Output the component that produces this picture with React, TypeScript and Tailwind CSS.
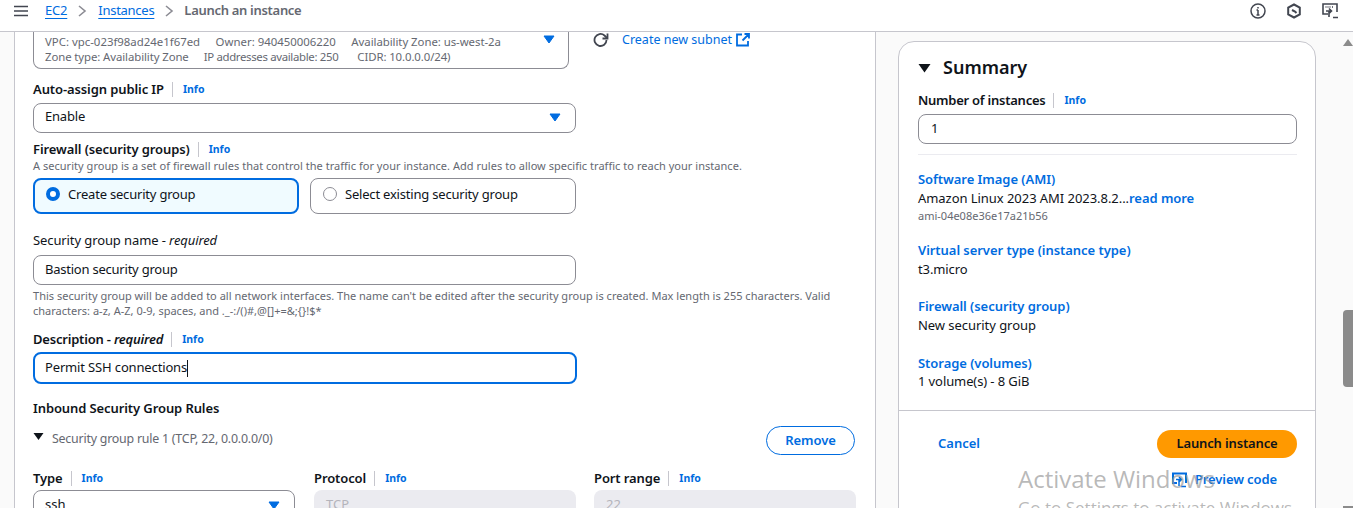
import React from "react";

const Info = ({ className = "" }: { className?: string }) => (
  <span className={"text-[10.5px] font-bold text-[#006ce0] relative top-px " + className}>Info</span>
);

const Label = ({ children, className = "", tight = false }: { children: React.ReactNode; className?: string; tight?: boolean }) => (
  <div className={"flex items-center h-[16px] " + className}>
    <span className={"text-[13px] font-semibold text-[#0f141a] leading-[16px] " + (tight ? "tracking-[-0.25px]" : "tracking-[-0.1px]")}>{children}</span>
    <span className="w-px h-[15px] bg-[#c6c6cd] ml-[8px] mr-[10px]" />
    <Info />
  </div>
);

const Caret = ({ className = "" }: { className?: string }) => (
  <svg width="12" height="9" viewBox="0 0 12 9" className={className}>
    <path d="M1 1h10L6 8z" fill="#006ce0" stroke="#006ce0" strokeLinejoin="round" />
  </svg>
);

const Chevron = () => (
  <svg width="10" height="12" viewBox="0 0 10 12" className="mx-[10px]">
    <path d="M2 1l6 5-6 5" fill="none" stroke="#8c8c94" strokeWidth="1.6" />
  </svg>
);

export default function App() {
  return (
    <div className="w-[1353px] h-[508px] overflow-hidden relative bg-white flex flex-col text-[#0f141a] font-['Noto_Sans','Liberation_Sans',sans-serif]">
      <header className="h-[32px] shrink-0 border-b border-[#c6c6cd] flex items-center pb-[9px] bg-white">
        <svg width="14" height="12" viewBox="0 0 14 12" className="ml-[14px] mr-[17px]">
          <path d="M0 1.500h14M0 6h14M0 10.500h14" stroke="#424650" strokeWidth="1.600" />
        </svg>
        <span className="text-[13px] tracking-[-0.2px] text-[#006ce0] underline underline-offset-[3px]">EC2</span>
        <Chevron />
        <span className="text-[13px] tracking-[-0.27px] text-[#006ce0] underline underline-offset-[3px] ml-px">Instances</span>
        <Chevron />
        <span className="text-[13px] font-semibold tracking-[-0.3px] text-[#656871]">Launch an instance</span>
        <div className="ml-auto flex items-center gap-[20px] mr-[15px]">
          <svg width="16" height="16" viewBox="0 0 16 16" fill="none" stroke="#424650" strokeWidth="1.500">
            <circle cx="8" cy="8" r="7" />
            <path d="M8 7v5M6.500 12h3M6.500 7H8M8 4v1.500" />
          </svg>
          <svg width="16" height="16" viewBox="0 0 16 16" fill="none" stroke="#424650" strokeWidth="2">
            <path d="M8 1.500l5.800 3.200v6.600L8 14.500l-5.800-3.200V4.700z" />
            <path d="M6 7l3 1.500L10.500 10" strokeWidth="2" />
          </svg>
          <svg width="16" height="16" viewBox="0 0 16 16" fill="none" stroke="#424650" strokeWidth="1.600">
            <path d="M6 11H1V1h14v8" />
            <path d="M3.500 4h5M10 4h2" strokeDasharray="1 1" />
            <path d="M4 8h5M7 5.500L9.500 8 7 10.500M7 8v6M11 14.500h5" />
          </svg>
        </div>
      </header>

      <div className="flex flex-1 min-h-0">
        <div className="w-[15px] shrink-0 bg-[#fafafa] border-r border-[#c6c6cd]" />

        <main className="w-[860px] shrink-0 pl-[18px] pr-[20px] bg-white">
          <div className="flex items-start">
            <div className="w-[536px] shrink-0 h-[37px] border border-t-0 border-[#8c8c94] rounded-b-[8px] pl-[11px] pr-[14px] relative text-[11.4px] leading-[15px] text-[#656871]">
              <div className="pt-[2px] flex gap-[15.500px]">
                <span>VPC: vpc-023f98ad24e1f67ed</span>
                <span>Owner: 940450006220</span>
                <span className="tracking-[-0.05px]">Availability Zone: us-west-2a</span>
              </div>
              <div className="flex gap-[15px]">
                <span className="tracking-[-0.1px]">Zone type: Availability Zone</span>
                <span className="tracking-[-0.33px]">IP addresses available: 250</span>
                <span className="tracking-[-0.1px] ml-[4px]">CIDR: 10.0.0.0/24)</span>
              </div>
              <Caret className="absolute right-[13px] top-[3px]" />
            </div>
            <svg width="16" height="16" viewBox="0 0 16 16" fill="none" stroke="#424650" strokeWidth="1.800" className="ml-[24px]">
              <path d="M13.500 8a6 6 0 1 1-2-4.500L14 6" />
              <path d="M14.500 1.500V6.500h-5" />
            </svg>
            <span className="ml-[13px] text-[12.500px] leading-[16px] text-[#006ce0]">Create new subnet</span>
            <svg width="14" height="14" viewBox="0 0 14 14" fill="none" stroke="#006ce0" strokeWidth="1.800" className="ml-[4px] mt-[1px]">
              <path d="M6 1.500H1v11h11V8M8.500 1H13v4.500M13 1L6.500 7.500" />
            </svg>
          </div>

          <Label className="mt-[12px]">Auto-assign public IP</Label>
          <div className="mt-[6px] w-[543px] h-[30px] border border-[#8c8c94] rounded-[8px] pl-[11px] pr-[14px] pb-[2px] flex items-center justify-between text-[13px] tracking-[-0.2px]">
            <span>Enable</span>
            <Caret />
          </div>

          <Label className="mt-[8px]">Firewall (security groups)</Label>
          <p className="mt-[1px] text-[11px] leading-[16px] tracking-[0.03px] text-[#656871]">
            A security group is a set of firewall rules that control the traffic for your instance. Add rules to allow specific traffic to reach your instance.
          </p>
          <div className="mt-[4px] flex gap-[11px]">
            <div className="w-[266px] h-[36px] border-2 border-[#006ce0] bg-[#f0fbff] rounded-[8px] flex items-start pl-[11px] pt-[5px] text-[13px] tracking-[-0.2px] leading-[18px]">
              <span className="w-[14px] h-[14px] rounded-full border-[4px] border-[#006ce0] bg-white mt-[2px] mr-[8px]" />
              Create security group
            </div>
            <div className="w-[266px] h-[36px] border border-[#8c8c94] rounded-[8px] flex items-start pl-[12px] pt-[6px] text-[13px] tracking-[-0.2px] leading-[18px]">
              <span className="w-[14px] h-[14px] rounded-full border border-[#8c8c94] bg-white mt-[2px] mr-[8px]" />
              Select existing security group
            </div>
          </div>

          <div className="mt-[18px] h-[16px] text-[13px] tracking-[-0.1px] leading-[16px]">
            Security group name - <i>required</i>
          </div>
          <div className="mt-[7px] w-[543px] h-[30px] border border-[#8c8c94] rounded-[8px] pl-[11px] flex items-center text-[13px] tracking-[-0.23px]">
            Bastion security group
          </div>
          <p className="mt-[3px] w-[810px] text-[11px] leading-[15px] tracking-[0.01px] text-[#656871]">
            This security group will be added to all network interfaces. The name can't be edited after the security group is created. Max length is 255 characters. Valid characters: a-z, A-Z, 0-9, spaces, and ._-:/()#,@[]+=&amp;;{"{}"}!$*
          </p>

          <div className="mt-[13px] flex items-center h-[16px]">
            <span className="text-[13px] font-semibold tracking-[-0.2px] leading-[16px]">
              Description - <i>required</i>
            </span>
            <span className="w-px h-[15px] bg-[#c6c6cd] ml-[8px] mr-[10px]" />
            <Info />
          </div>
          <div className="mt-[5px] w-[544px] h-[32px] border-2 border-[#006ce0] rounded-[8px] pl-[10px] flex items-center text-[13px] tracking-[-0.15px]">
            Permit SSH connections
            <span className="w-px h-[17px] bg-[#0f141a]" />
          </div>

          <div className="mt-[16px] text-[13px] font-semibold tracking-[-0.1px] leading-[16px]">Inbound Security Group Rules</div>

          <div className="mt-[10px] flex items-start justify-between">
            <div className="flex items-center h-[26px]">
              <svg width="11" height="9" viewBox="0 0 11 9" className="mb-[6px]">
                <path d="M.500 1h10L5.500 8z" fill="#0f141a" />
              </svg>
              <span className="ml-[8px] text-[12.4px] tracking-[-0.22px] text-[#656871]">Security group rule 1 (TCP, 22, 0.0.0.0/0)</span>
            </div>
            <div className="w-[89px] h-[29px] border border-[#006ce0] rounded-full flex items-center justify-center text-[13px] font-semibold tracking-[-0.1px] text-[#006ce0]">
              Remove
            </div>
          </div>

          <div className="mt-[15px] w-[824px] flex gap-[19px] items-start">
            <div className="w-[262px] shrink-0">
              <Label>Type</Label>
              <div className="mt-[4px] h-[30px] border border-[#8c8c94] rounded-[8px] pl-[11px] pr-[14px] flex items-center justify-between text-[13px]">
                <span>ssh</span>
                <Caret />
              </div>
            </div>
            <div className="w-[262px] shrink-0">
              <Label>Protocol</Label>
              <div className="mt-[4px] h-[30px] bg-[#ebebf0] rounded-[8px] pl-[12px] flex items-center text-[13px] text-[#b4b4bb]">TCP</div>
            </div>
            <div className="w-[262px] shrink-0 -ml-px">
              <Label>Port range</Label>
              <div className="mt-[4px] h-[30px] bg-[#ebebf0] rounded-[8px] pl-[12px] flex items-center text-[13px] text-[#b4b4bb]">22</div>
            </div>
          </div>
        </main>

        <aside className="w-[468px] shrink-0 border-l border-[#c6c6cd] bg-[#fafafa] pl-[22px] pt-[9px]">
          <div className="w-[418px] h-[500px] bg-white border border-[#c6c6cd] rounded-[16px] overflow-hidden">
            <div className="pl-[19px] pr-[18px]">
              <div className="flex items-center h-[25px] mt-[13px]">
                <svg width="13" height="10" viewBox="0 0 13 10">
                  <path d="M.500 1h12L6.500 9.500z" fill="#0f141a" />
                </svg>
                <span className="ml-[12px] text-[18px] font-semibold leading-[25px]">Summary</span>
              </div>
              <Label tight className="mt-[12px]">Number of instances</Label>
              <div className="mt-[6px] h-[30px] border border-[#8c8c94] rounded-[8px] pl-[12px] pb-[1px] flex items-center text-[13px]">1</div>
              <div className="mt-[10px] h-px bg-[#ebebf0]" />

              <div className="mt-[16px] text-[13px] font-semibold tracking-[-0.05px] leading-[16px] text-[#006ce0]">Software Image (AMI)</div>
              <div className="mt-[3px] text-[13px] tracking-[-0.05px] leading-[16px]">
                Amazon Linux 2023 AMI 2023.8.2...<span className="font-semibold text-[#006ce0]">read more</span>
              </div>
              <div className="mt-[2px] text-[11px] leading-[15px] text-[#656871]">ami-04e08e36e17a21b56</div>

              <div className="mt-[19px] text-[13px] font-semibold tracking-[-0.05px] leading-[16px] text-[#006ce0]">Virtual server type (instance type)</div>
              <div className="mt-[3px] text-[13px] tracking-[-0.1px] leading-[16px]">t3.micro</div>

              <div className="mt-[21px] text-[13px] font-semibold tracking-[-0.05px] leading-[16px] text-[#006ce0]">Firewall (security group)</div>
              <div className="mt-[3px] text-[13px] tracking-[-0.05px] leading-[16px]">New security group</div>

              <div className="mt-[22px] text-[13px] font-semibold tracking-[-0.05px] leading-[16px] text-[#006ce0]">Storage (volumes)</div>
              <div className="mt-[2px] text-[13px] tracking-[-0.1px] leading-[16px]">1 volume(s) - 8 GiB</div>
            </div>
            <div className="mt-[21px] h-px bg-[#c6c6cd]" />
            <div className="pl-[19px] pr-[18px] pt-[19px]">
              <div className="flex items-center justify-between">
                <span className="ml-[20px] text-[13px] font-semibold text-[#006ce0]">Cancel</span>
                <span className="w-[140px] h-[28px] rounded-full bg-[#ff9900] flex items-center justify-center text-[13px] font-semibold tracking-[-0.15px]">Launch instance</span>
              </div>
              <div className="mt-[12px] flex items-center justify-end pr-[20px] text-[13px] font-semibold tracking-[-0.1px] text-[#006ce0]">
                <svg width="15" height="16" viewBox="0 0 15 16" fill="none" stroke="#006ce0" strokeWidth="1.500" className="mr-[8px]">
                  <path d="M5 11H1V1.500h13V11" strokeWidth="2" />
                  <path d="M4 7.500h5M7 5l2.500 2.500L7 10M7 8v6M9 14.500h5" />
                </svg>
                Preview code
              </div>
            </div>
          </div>
        </aside>

        <div className="w-[10px] shrink-0 bg-[#fafafa] relative">
          <svg width="10" height="8" viewBox="0 0 10 8" className="absolute top-[6px] left-0">
            <path d="M0 8L5 1l5 7z" fill="#8b8b8b" />
          </svg>
          <div className="absolute left-0 top-[278px] w-[10px] h-[77px] rounded-l-[4px] bg-[#8b8b8b]" />
          <div className="absolute left-0 top-[474px] w-[10px] h-[2px] bg-[#8b8b8b]" />
        </div>
      </div>

      <div className="absolute left-[1018px] top-[463px] pointer-events-none text-[#9a9a9a]/70 font-['Open_Sans',sans-serif]">
        <div className="text-[24px] leading-[32px]">Activate Windows</div>
        <div className="text-[17px] leading-[20px] mt-[3px] whitespace-nowrap">Go to Settings to activate Windows.</div>
      </div>
    </div>
  );
}
